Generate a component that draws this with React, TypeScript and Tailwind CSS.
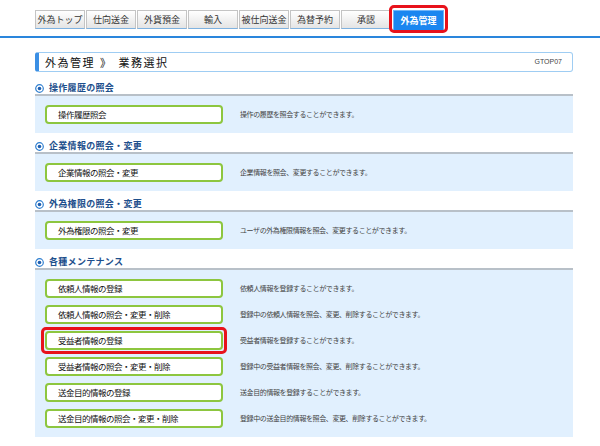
import React from "react";

const tabs = ["外為トップ", "仕向送金", "外貨預金", "輸入", "被仕向送金", "為替予約", "承認"];

const sections = [
  {
    title: "操作履歴の照会",
    rows: [{ label: "操作履歴照会", desc: "操作の履歴を照会することができます。" }],
  },
  {
    title: "企業情報の照会・変更",
    rows: [{ label: "企業情報の照会・変更", desc: "企業情報を照会、変更することができます。" }],
  },
  {
    title: "外為権限の照会・変更",
    rows: [{ label: "外為権限の照会・変更", desc: "ユーザの外為権限情報を照会、変更することができます。" }],
  },
  {
    title: "各種メンテナンス",
    rows: [
      { label: "依頼人情報の登録", desc: "依頼人情報を登録することができます。" },
      { label: "依頼人情報の照会・変更・削除", desc: "登録中の依頼人情報を照会、変更、削除することができます。" },
      { label: "受益者情報の登録", desc: "受益者情報を登録することができます。", mark: true },
      { label: "受益者情報の照会・変更・削除", desc: "登録中の受益者情報を照会、変更、削除することができます。" },
      { label: "送金目的情報の登録", desc: "送金目的情報を登録することができます。" },
      { label: "送金目的情報の照会・変更・削除", desc: "登録中の送金目的情報を照会、変更、削除することができます。" },
    ],
  },
];

const RadioIcon = () => (
  <svg width="9" height="9" viewBox="0 0 9 9" className="shrink-0">
    <circle cx="4.5" cy="4.5" r="3.8" fill="#fff" stroke="#2f7fd0" strokeWidth="1.2" />
    <circle cx="4.5" cy="4.5" r="1.8" fill="#1f5fb0" />
  </svg>
);

export default function App() {
  return (
    <div className="w-[600px] h-[446px] bg-white overflow-hidden font-['Noto_Sans_CJK_JP',sans-serif] text-[#222]">
      {/* tabs */}
      <div className="flex gap-px pl-[35px] pt-[10px] h-[29px]">
        {tabs.map((t) => (
          <div
            key={t}
            className="w-[50px] h-[19px] flex items-center justify-center text-[9px] text-[#333] border border-[#c4c4c4] border-b-[#7fb2e0] bg-gradient-to-b from-white to-[#e4e4e4]"
          >
            {t}
          </div>
        ))}
        <div className="relative ml-px">
          <div className="w-[51px] h-[21px] flex items-center justify-center text-[9px] font-bold text-white bg-[#1a86f0] border border-[#6fb4f7]">
            外為管理
          </div>
          <div className="absolute -left-[4px] -top-[5px] w-[59px] h-[28px] border-[3px] border-[#e8121b] rounded-[5px]" />
        </div>
      </div>
      <div className="mt-[7px] h-[2px] bg-[#2a86dc]" />

      <div className="pl-[35px] w-[573px]">
        {/* page title */}
        <div className="mt-[14px] h-[20px] flex items-center justify-between border border-[#9fcdf3] border-l-[4px] border-l-[#3b8fe4] rounded-[3px] pl-[6px] pr-[10px]">
          <span className="text-[11px] tracking-[1.5px] text-[#111] flex items-center">
            <span>外為管理</span>
            <span className="ml-[5px] mr-[6px]">》</span>
            <span>業務選択</span>
          </span>
          <span className="text-[7px] text-[#444] font-['Liberation_Sans',sans-serif]">GTOP07</span>
        </div>

        {sections.map((s, i) => (
          <div key={s.title} className={i === 0 ? "mt-[10px]" : "mt-[7px]"}>
            <div className="h-[12px] flex items-center gap-[5px]">
              <RadioIcon />
              <span className="text-[9px] font-bold tracking-[0.3px] text-[#1d4f8c]">{s.title}</span>
            </div>
            <div className="border-t-2 border-[#b8c0c8] bg-[#e1f0fe] px-[10px] py-[9px] flex flex-col gap-[7px]">
              {s.rows.map((r) => (
                <div key={r.label} className="flex items-center">
                  <div className="relative">
                    <div className="w-[178px] h-[19px] flex items-center pl-[11px] bg-white border-2 border-[#8dc63f] rounded-[4px] text-[8.5px] tracking-[-0.5px] text-[#111]">
                      {r.label}
                    </div>
                    {r.mark && (
                      <div className="absolute -left-[4px] -top-[4px] w-[186px] h-[27px] border-[3px] border-[#e8121b] rounded-[5px]" />
                    )}
                  </div>
                  <span className="ml-[17px] text-[7px] tracking-[-0.4px] text-[#444]">{r.desc}</span>
                </div>
              ))}
            </div>
          </div>
        ))}
      </div>
    </div>
  );
}
